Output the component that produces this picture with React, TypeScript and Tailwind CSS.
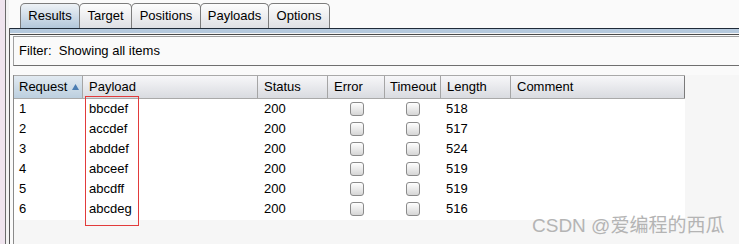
import React from "react";

const rows: [string, string, string, string][] = [
  ["1", "bbcdef", "200", "518"],
  ["2", "accdef", "200", "517"],
  ["3", "abddef", "200", "524"],
  ["4", "abceef", "200", "519"],
  ["5", "abcdff", "200", "519"],
  ["6", "abcdeg", "200", "516"],
];

const tabs: { label: string; w: string; active?: boolean }[] = [
  { label: "Results", w: "w-[60px]", active: true },
  { label: "Target", w: "w-[53px]" },
  { label: "Positions", w: "w-[70px]" },
  { label: "Payloads", w: "w-[69px]" },
  { label: "Options", w: "w-[62px]" },
];

function Checkbox() {
  return (
    <div className="w-[14px] h-[14px] rounded-[3px] border border-[#8b8b8b] bg-linear-to-b from-white to-[#d6d6d6]" />
  );
}

const cols = "grid grid-cols-[69px_175px_70px_57px_56px_70px_174px]";

export default function App() {
  return (
    <div className="relative w-[739px] h-[244px] overflow-hidden bg-[#fafafa] flex text-[13px] text-black font-['Liberation_Sans',Arial,sans-serif]">
      {/* left frame strip */}
      <div className="flex h-full shrink-0">
        <div className="w-[5px] bg-[#efe4ee]" />
        <div className="w-[1px] bg-[#6a6a6a]" />
        <div className="w-[3px] bg-[#f2f2f2]" />
        <div className="w-[1px] mt-[28px] bg-[#555]" />
      </div>

      <div className="flex-1 flex flex-col min-w-0">
        {/* tabs */}
        <div className="h-[28px] pt-[3px] pl-[10px] flex items-end">
          {tabs.map((t) => (
            <div
              key={t.label}
              className={`${t.w} h-[25px] -mr-[1px] rounded-t-[5px] border border-b-0 border-[#7c7c7c] flex items-center justify-center ${
                t.active
                  ? "bg-linear-to-b from-[#eef2f6] to-[#b3c7da]"
                  : "bg-linear-to-b from-[#fdfdfd] to-[#dfe0e4]"
              }`}
            >
              {t.label}
            </div>
          ))}
        </div>
        {/* separator */}
        <div className="h-[1px] bg-[#1f2a38]" />
        <div className="h-[4px] bg-[#b5c9dd]" />
        <div className="h-[1px] bg-[#f5f5f5]" />
        <div className="h-[1px] bg-[#4a4a4a]" />

        <div className="flex-1 flex flex-col pt-[1px] pl-[3px]">
          {/* filter */}
          <div className="h-[30px] -mr-[4px] border border-[#a0a0a0] border-b-[#6f6f6f] flex items-center pl-[5px]">
            Filter:&nbsp; Showing all items
          </div>

          {/* table */}
          <div className="mt-[9px] flex-1 border-l border-[#8a8a8a] bg-[#f6f6f6]">
            <div className={`${cols} w-[671px] h-[24px] border-t border-b border-[#a9a9a9]`}>
              <div className="flex items-center pl-[5px] border-r border-[#a5a5a5] bg-linear-to-b from-[#e2eaf1] to-[#bccfdf]">
                Request
                <svg width="7" height="6" viewBox="0 0 7 6" className="ml-[5px]">
                  <path d="M3.5 0 L7 6 L0 6 Z" fill="#4b7db2" />
                </svg>
              </div>
              {["Payload", "Status", "Error", "Timeout", "Length", "Comment"].map((h, i) => (
                <div
                  key={h}
                  className={`flex items-center ${i === 3 ? "pl-[5px]" : "pl-[6px]"} border-r ${
                    i === 5 ? "border-[#7a7a7a]" : "border-[#a5a5a5]"
                  } bg-linear-to-b from-[#f7f7f9] to-[#d9dbe0]`}
                >
                  {h}
                </div>
              ))}
            </div>
            <div className="w-[671px] bg-white pb-[1px]">
              {rows.map((r) => (
                <div key={r[0]} className={`${cols} h-[20px] items-center`}>
                  <div className="pl-[5px]">{r[0]}</div>
                  <div className="pl-[6px]">{r[1]}</div>
                  <div className="pl-[6px]">{r[2]}</div>
                  <div className="flex justify-center">
                    <Checkbox />
                  </div>
                  <div className="flex justify-center">
                    <Checkbox />
                  </div>
                  <div className="pl-[5px]">{r[3]}</div>
                  <div />
                </div>
              ))}
            </div>
          </div>
        </div>
      </div>

      {/* red annotation box */}
      <div className="absolute left-[85px] top-[96px] w-[54px] h-[130px] border border-[#e23b3b]" />

      {/* watermark */}
      <div className="absolute left-[532px] top-[214px] leading-[24px] text-[19px] text-[#b4b4b4] whitespace-nowrap font-['Liberation_Sans','Noto_Sans_CJK_SC',sans-serif]">
        CSDN @爱编程的西瓜
      </div>
    </div>
  );
}
